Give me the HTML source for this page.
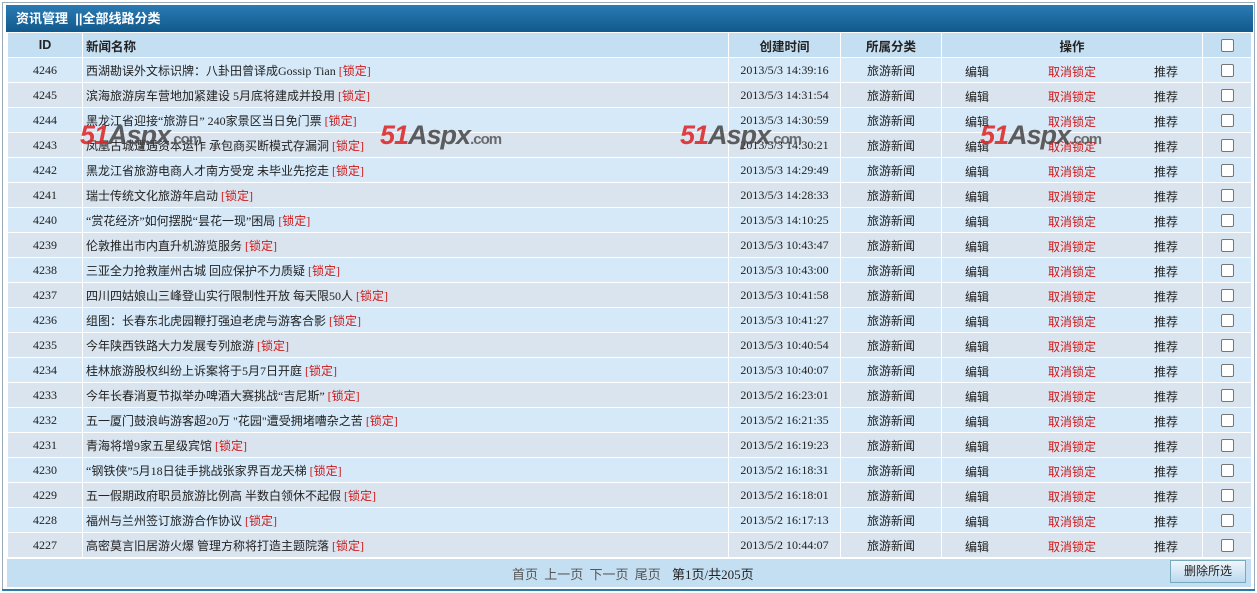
<!DOCTYPE html>
<html><head><meta charset="utf-8"><style>
*{margin:0;padding:0;box-sizing:border-box}
body{width:1257px;height:593px;background:#fff;font-family:"Liberation Serif","Noto Sans CJK SC",serif;font-size:12px;color:#222;position:relative;overflow:hidden}
.frame{position:absolute;left:2px;top:2px;width:1253px;height:588px;border:1px solid #9ab;}
.title{position:absolute;left:6px;top:5px;width:1247px;height:27px;background:linear-gradient(#2a7bb4,#11598c);color:#fff;font-weight:bold;font-size:13px;line-height:27px;padding-left:10px;font-family:"Liberation Sans","Noto Sans CJK SC",sans-serif}
table{position:absolute;left:7px;top:32px;width:1244px;border-collapse:collapse;table-layout:fixed}
td,th{border:1px solid #fff;height:25px;text-align:center;white-space:nowrap;overflow:hidden;font-weight:normal}
th{background:#c5dff2;font-weight:bold;font-family:"Liberation Sans","Noto Sans CJK SC",sans-serif;font-size:12.5px}
tr.a td{background:#d5e9f9}
tr.b td{background:#d9e4ee}
td.n,th.n{text-align:left;padding-left:3px}
.l{color:#d01818}
.op{position:relative;height:24px}
.op span{position:absolute;top:2px;line-height:24px;transform:translateX(-50%)}
.op span:nth-child(1){left:35px}
.op span:nth-child(2){left:130px}
.op span:nth-child(3){left:224px}
.cb{display:inline-block;width:13px;height:13px;border:1px solid #777;background:#fff;vertical-align:middle;border-radius:2px}
.foot{position:absolute;left:7px;top:559px;width:1244px;height:28px;background:#c5dff2;}
.pg{position:absolute;left:505px;top:5px;color:#555;font-size:13px;word-spacing:3px}
.pg b{font-weight:normal;color:#222;margin-left:5px}
.btn{position:absolute;right:5px;top:1px;width:76px;height:23px;border:1px solid #7ab;background:linear-gradient(#eef6fc,#bcd8ee);text-align:center;line-height:21px;font-size:12px}
.bl{position:absolute;left:2px;top:589px;width:1253px;height:2px;background:#2c7aa8}
.wm{position:absolute;top:120px;font-family:"Liberation Sans",sans-serif;font-weight:bold;font-style:italic;font-size:27px;color:#444;opacity:.85;letter-spacing:-1px}
.wm span{color:#d22}
.wm small{font-size:15px;color:#555;font-style:normal}
</style></head><body>
<div class="frame"></div>
<div class="title">资讯管理 &nbsp;||全部线路分类</div>
<table>
<colgroup><col style="width:75px"><col style="width:646px"><col style="width:112px"><col style="width:101px"><col style="width:261px"><col style="width:49px"></colgroup>
<tr><th>ID</th><th class="n">新闻名称</th><th>创建时间</th><th>所属分类</th><th>操作</th><th><span class="cb"></span></th></tr>
<tbody id="tb">
<tr class="a"><td>4246</td><td class="n">西湖勘误外文标识牌：八卦田曾译成Gossip Tian <span class="l">[锁定]</span></td><td>2013/5/3 14:39:16</td><td>旅游新闻</td><td><div class="op"><span>编辑</span><span class="l">取消锁定</span><span>推荐</span></div></td><td><span class="cb"></span></td></tr>
<tr class="b"><td>4245</td><td class="n">滨海旅游房车营地加紧建设 5月底将建成并投用 <span class="l">[锁定]</span></td><td>2013/5/3 14:31:54</td><td>旅游新闻</td><td><div class="op"><span>编辑</span><span class="l">取消锁定</span><span>推荐</span></div></td><td><span class="cb"></span></td></tr>
<tr class="a"><td>4244</td><td class="n">黑龙江省迎接“旅游日” 240家景区当日免门票 <span class="l">[锁定]</span></td><td>2013/5/3 14:30:59</td><td>旅游新闻</td><td><div class="op"><span>编辑</span><span class="l">取消锁定</span><span>推荐</span></div></td><td><span class="cb"></span></td></tr>
<tr class="b"><td>4243</td><td class="n">凤凰古城遭遇资本运作 承包商买断模式存漏洞 <span class="l">[锁定]</span></td><td>2013/5/3 14:30:21</td><td>旅游新闻</td><td><div class="op"><span>编辑</span><span class="l">取消锁定</span><span>推荐</span></div></td><td><span class="cb"></span></td></tr>
<tr class="a"><td>4242</td><td class="n">黑龙江省旅游电商人才南方受宠 未毕业先挖走 <span class="l">[锁定]</span></td><td>2013/5/3 14:29:49</td><td>旅游新闻</td><td><div class="op"><span>编辑</span><span class="l">取消锁定</span><span>推荐</span></div></td><td><span class="cb"></span></td></tr>
<tr class="b"><td>4241</td><td class="n">瑞士传统文化旅游年启动 <span class="l">[锁定]</span></td><td>2013/5/3 14:28:33</td><td>旅游新闻</td><td><div class="op"><span>编辑</span><span class="l">取消锁定</span><span>推荐</span></div></td><td><span class="cb"></span></td></tr>
<tr class="a"><td>4240</td><td class="n">“赏花经济”如何摆脱“昙花一现”困局 <span class="l">[锁定]</span></td><td>2013/5/3 14:10:25</td><td>旅游新闻</td><td><div class="op"><span>编辑</span><span class="l">取消锁定</span><span>推荐</span></div></td><td><span class="cb"></span></td></tr>
<tr class="b"><td>4239</td><td class="n">伦敦推出市内直升机游览服务 <span class="l">[锁定]</span></td><td>2013/5/3 10:43:47</td><td>旅游新闻</td><td><div class="op"><span>编辑</span><span class="l">取消锁定</span><span>推荐</span></div></td><td><span class="cb"></span></td></tr>
<tr class="a"><td>4238</td><td class="n">三亚全力抢救崖州古城 回应保护不力质疑 <span class="l">[锁定]</span></td><td>2013/5/3 10:43:00</td><td>旅游新闻</td><td><div class="op"><span>编辑</span><span class="l">取消锁定</span><span>推荐</span></div></td><td><span class="cb"></span></td></tr>
<tr class="b"><td>4237</td><td class="n">四川四姑娘山三峰登山实行限制性开放 每天限50人 <span class="l">[锁定]</span></td><td>2013/5/3 10:41:58</td><td>旅游新闻</td><td><div class="op"><span>编辑</span><span class="l">取消锁定</span><span>推荐</span></div></td><td><span class="cb"></span></td></tr>
<tr class="a"><td>4236</td><td class="n">组图：长春东北虎园鞭打强迫老虎与游客合影 <span class="l">[锁定]</span></td><td>2013/5/3 10:41:27</td><td>旅游新闻</td><td><div class="op"><span>编辑</span><span class="l">取消锁定</span><span>推荐</span></div></td><td><span class="cb"></span></td></tr>
<tr class="b"><td>4235</td><td class="n">今年陕西铁路大力发展专列旅游 <span class="l">[锁定]</span></td><td>2013/5/3 10:40:54</td><td>旅游新闻</td><td><div class="op"><span>编辑</span><span class="l">取消锁定</span><span>推荐</span></div></td><td><span class="cb"></span></td></tr>
<tr class="a"><td>4234</td><td class="n">桂林旅游股权纠纷上诉案将于5月7日开庭 <span class="l">[锁定]</span></td><td>2013/5/3 10:40:07</td><td>旅游新闻</td><td><div class="op"><span>编辑</span><span class="l">取消锁定</span><span>推荐</span></div></td><td><span class="cb"></span></td></tr>
<tr class="b"><td>4233</td><td class="n">今年长春消夏节拟举办啤酒大赛挑战“吉尼斯” <span class="l">[锁定]</span></td><td>2013/5/2 16:23:01</td><td>旅游新闻</td><td><div class="op"><span>编辑</span><span class="l">取消锁定</span><span>推荐</span></div></td><td><span class="cb"></span></td></tr>
<tr class="a"><td>4232</td><td class="n">五一厦门鼓浪屿游客超20万 "花园"遭受拥堵嘈杂之苦 <span class="l">[锁定]</span></td><td>2013/5/2 16:21:35</td><td>旅游新闻</td><td><div class="op"><span>编辑</span><span class="l">取消锁定</span><span>推荐</span></div></td><td><span class="cb"></span></td></tr>
<tr class="b"><td>4231</td><td class="n">青海将增9家五星级宾馆 <span class="l">[锁定]</span></td><td>2013/5/2 16:19:23</td><td>旅游新闻</td><td><div class="op"><span>编辑</span><span class="l">取消锁定</span><span>推荐</span></div></td><td><span class="cb"></span></td></tr>
<tr class="a"><td>4230</td><td class="n">“钢铁侠”5月18日徒手挑战张家界百龙天梯 <span class="l">[锁定]</span></td><td>2013/5/2 16:18:31</td><td>旅游新闻</td><td><div class="op"><span>编辑</span><span class="l">取消锁定</span><span>推荐</span></div></td><td><span class="cb"></span></td></tr>
<tr class="b"><td>4229</td><td class="n">五一假期政府职员旅游比例高 半数白领休不起假 <span class="l">[锁定]</span></td><td>2013/5/2 16:18:01</td><td>旅游新闻</td><td><div class="op"><span>编辑</span><span class="l">取消锁定</span><span>推荐</span></div></td><td><span class="cb"></span></td></tr>
<tr class="a"><td>4228</td><td class="n">福州与兰州签订旅游合作协议 <span class="l">[锁定]</span></td><td>2013/5/2 16:17:13</td><td>旅游新闻</td><td><div class="op"><span>编辑</span><span class="l">取消锁定</span><span>推荐</span></div></td><td><span class="cb"></span></td></tr>
<tr class="b"><td>4227</td><td class="n">高密莫言旧居游火爆 管理方称将打造主题院落 <span class="l">[锁定]</span></td><td>2013/5/2 10:44:07</td><td>旅游新闻</td><td><div class="op"><span>编辑</span><span class="l">取消锁定</span><span>推荐</span></div></td><td><span class="cb"></span></td></tr>
</tbody></table>
<div class="foot"><div class="pg">首页 上一页 下一页 尾页 <b>第1页/共205页</b></div><div class="btn">删除所选</div></div>
<div class="bl"></div>
<div class="wm" style="left:80px"><span>51</span>Aspx<small>.com</small></div>
<div class="wm" style="left:380px"><span>51</span>Aspx<small>.com</small></div>
<div class="wm" style="left:680px"><span>51</span>Aspx<small>.com</small></div>
<div class="wm" style="left:980px"><span>51</span>Aspx<small>.com</small></div>
</body></html>
